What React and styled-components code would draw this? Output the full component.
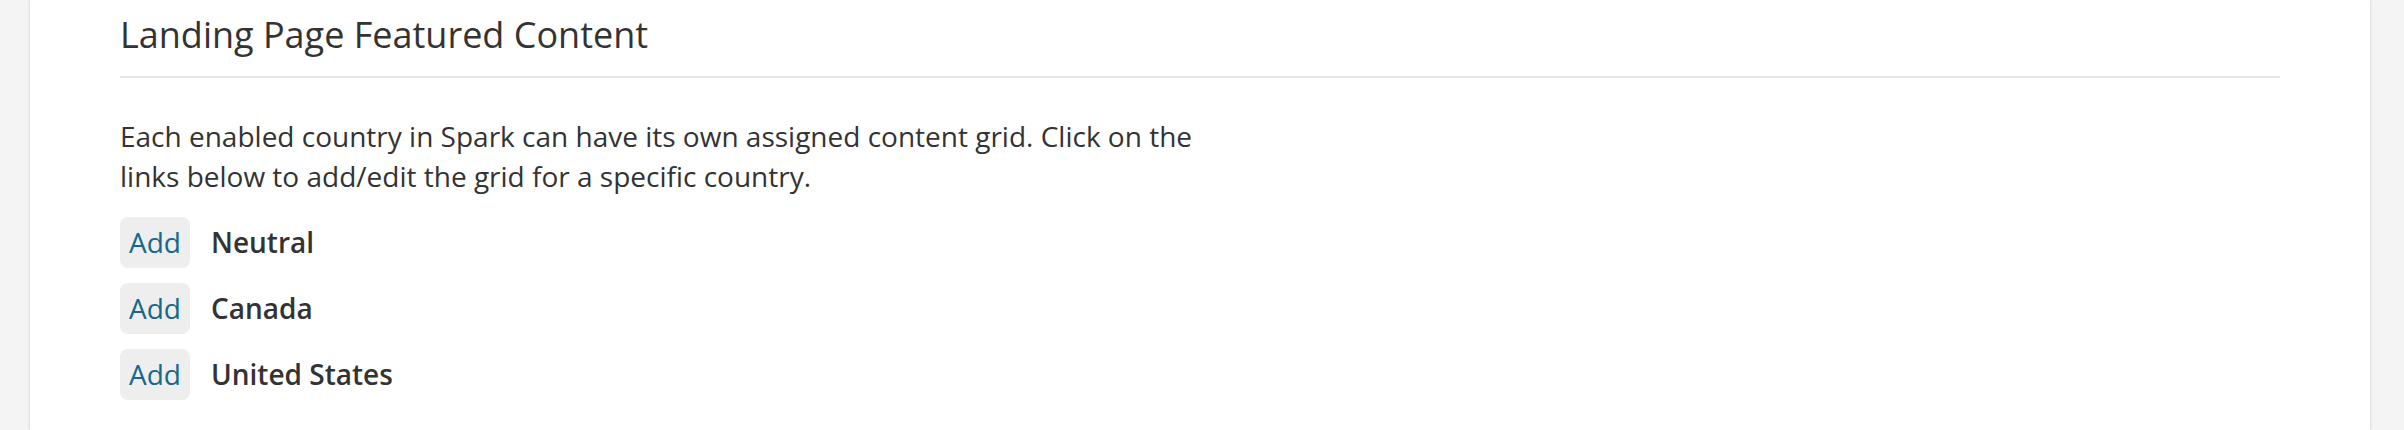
import React from "react";
import styled, { createGlobalStyle } from "styled-components";

const GlobalStyle = createGlobalStyle`
  html, body {
    margin: 0;
    padding: 0;
    background: #f4f4f4;
  }
  body {
    font-family: "Open Sans", "Liberation Sans", Arial, sans-serif;
    color: #333333;
  }
`;

const Shell = styled.div`
  display: flex;
  min-height: 430px;
  padding: 0 34px 0 30px;
`;

const Panel = styled.main`
  flex: 1;
  background: #ffffff;
  box-shadow: 0 0 3px rgba(0, 0, 0, 0.16);
  padding: 15px 90px 20px;
`;

const Header = styled.h2`
  margin: 0;
  padding-bottom: 21px;
  font-size: 36px;
  line-height: 1.1;
  font-weight: 400;
  color: #333333;
  border-bottom: 2px solid #e6e6e6;
`;

const Intro = styled.p`
  margin: 38px 0 21px;
  max-width: 1110px;
  font-size: 28px;
  line-height: 40px;
`;

const List = styled.ul`
  list-style: none;
  margin: 0;
  padding: 0;
  display: flex;
  flex-direction: column;
  gap: 15px;
`;

const Row = styled.li`
  display: flex;
  align-items: center;
  gap: 21px;
`;

const AddButton = styled.a`
  display: inline-block;
  background: #eeeeee;
  border-radius: 8px;
  padding: 6px 9px;
  font-size: 28px;
  line-height: 39px;
  color: #15688c;
  text-decoration: none;
  cursor: pointer;
`;

const Country = styled.span`
  font-size: 28px;
  line-height: 39px;
  font-weight: 600;
  color: #333333;
`;

const countries = ["Neutral", "Canada", "United States"];

export default function App() {
  return (
    <>
      <GlobalStyle />
      <Shell>
        <Panel>
          <Header>Landing Page Featured Content</Header>
          <Intro>
            Each enabled country in Spark can have its own assigned content grid. Click on the
            links below to add/edit the grid for a specific country.
          </Intro>
          <List>
            {countries.map((c) => (
              <Row key={c}>
                <AddButton href="#">Add</AddButton>
                <Country>{c}</Country>
              </Row>
            ))}
          </List>
        </Panel>
      </Shell>
    </>
  );
}
